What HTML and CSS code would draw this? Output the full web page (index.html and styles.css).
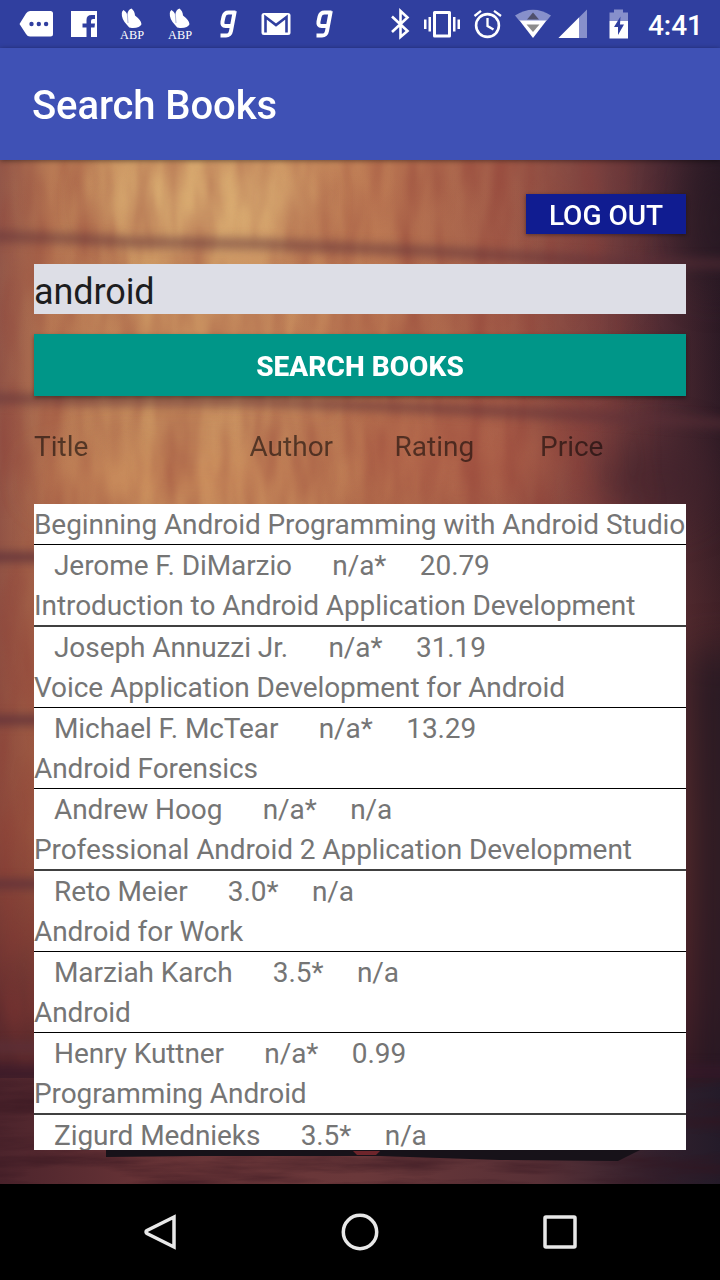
FILE: index.html
```html
<!DOCTYPE html>
<html lang="en">
<head>
<meta charset="utf-8">
<title>Search Books</title>
<link rel="stylesheet" href="styles.css">
</head>
<body>
<div class="phone">
  <header class="status">
    <svg class="status-icons" viewBox="0 0 720 48" width="720" height="48" fill="#fff">
      <path d="M19.500 24 L26 13.500 Q27.500 11 30 11 H50.500 Q53 11 53 13.500 V34 Q53 36.500 50.500 36.500 H30 Q27.500 36.500 26 34 Z"/>
      <g fill="#303f9f"><circle cx="31.500" cy="24" r="2.200"/><circle cx="38.800" cy="24" r="2.200"/><circle cx="46.100" cy="24" r="2.200"/></g>
      <path d="M71 11 H97 V37 H91 V27.500 H94.500 L95 23.500 H91 V21 Q91 19 93 19 H95 V15 H91.500 Q86.500 15 86.500 20 V23.500 H82.500 V27.500 H86.500 V37 H71 Z"/>
      <g id="abp">
        <path d="M127.500 25.500 Q121.200 19.500 121.800 13 Q122 11 123.500 10 Q126.300 11.500 127.300 14.500 Q128 9.500 131.500 8.500 Q134.800 11 135 15.500 Q141.500 20.500 141.500 24.200 Q140 27.800 133 28 Q129 28.500 127.500 25.500 Z"/>
        <path d="M128 23 L127.300 14" stroke="#7380c4" stroke-width=".6"/>
        <text class="abp" x="120" y="39" textLength="24" lengthAdjust="spacingAndGlyphs">ABP</text>
      </g>
      <use href="#abp" x="48"/>
      <g id="g">
        <path d="M235.500 12.500 H228.500 Q224.500 12.500 223.600 16.500 L222.500 21.500 Q221.800 26 225.500 26 H231.500 M234.800 11 L231 31 Q230.200 35.500 226 35.500 H220.500" fill="none" stroke="#fff" stroke-width="4"/>
      </g>
      <rect x="261.500" y="13" width="29" height="22" rx="2.500"/>
      <path d="M265.500 32.500 V17 L276 25 L286.500 17 V32.500" fill="none" stroke="#303f9f" stroke-width="2.600"/>
      <use href="#g" x="96"/>
      <path d="M392 16.500 L407.500 31 L400.500 37 V11 L407.500 17.500 L392 32" fill="none" stroke="#fff" stroke-width="2.600"/>
      <path d="M434.500 11 H449.500 Q451 11 451 12.500 V36 Q451 37.500 449.500 37.500 H434.500 Q433 37.500 433 36 V12.500 Q433 11 434.500 11 Z M436 14 V34.500 H448 V14 Z" fill-rule="evenodd"/>
      <path d="M424 19.500 h2.500 v9.500 h-2.500z M428.500 17 h2.500 v14.500 h-2.500z M453 17 h2.500 v14.500 h-2.500z M457.500 19.500 h2.500 v9.500 h-2.500z"/>
      <circle cx="487.500" cy="25.500" r="11.400" fill="none" stroke="#fff" stroke-width="2.600"/>
      <path d="M487.500 18 V26 L493.500 29.500 M474.500 16 L481 10.800 M494 10.800 L501 16" fill="none" stroke="#fff" stroke-width="2.300"/>
      <path d="M515 15.500 Q533 4 551 15.500 L546.500 21 H519.500 Z" fill="#8790cb"/>
      <path d="M519.500 20.500 H546.500 L533 38 Z"/>
      <path d="M533 12.500 L539 19.500 H527 Z" fill="#4f506c"/>
      <path d="M526.500 24.500 H539.500 L533 32 Z" fill="#8c8c8c"/>
      <path d="M558.500 38 L587 9.500 V38 Z" fill="#8790cb"/>
      <path d="M558.500 38 L579 17.500 V38 Z"/>
      <path d="M609.500 12.500 H614 V9.500 H623 V12.500 H628 V21 H609.500 Z" fill="#8790cb"/>
      <path d="M609.500 21 H628 V38.500 H609.500 Z"/>
      <path d="M620.500 16.500 L614 27 H618 V35 L624 24.500 H620 Z" fill="#303f9f"/>
    </svg>
    <span class="clock">4:41</span>
  </header>
  <div class="appbar">Search Books</div>
  <main class="content">
    <svg class="wood" viewBox="0 160 720 1024" width="720" height="1024" preserveAspectRatio="none">
      <defs>
        <linearGradient id="side" x1="0" x2="1" y1="0" y2="0">
          <stop offset="0" stop-color="#94594a"/><stop offset=".07" stop-color="#b87954"/>
          <stop offset=".2" stop-color="#ce9964"/><stop offset=".36" stop-color="#ce9764"/>
          <stop offset=".52" stop-color="#bd7a54"/><stop offset=".7" stop-color="#a35e4a"/>
          <stop offset=".83" stop-color="#7a413f"/><stop offset=".92" stop-color="#4c2a33"/>
          <stop offset="1" stop-color="#271824"/>
        </linearGradient>
        <linearGradient id="down" x1="0" x2="0" y1="0" y2="1">
          <stop offset="0" stop-color="#8a3b30" stop-opacity="0"/><stop offset=".3" stop-color="#8a3b30" stop-opacity=".1"/>
          <stop offset=".65" stop-color="#84392d" stop-opacity=".5"/><stop offset=".82" stop-color="#5c2529" stop-opacity=".8"/>
          <stop offset=".9" stop-color="#3e1a24" stop-opacity=".9"/><stop offset="1" stop-color="#4a222a"/>
        </linearGradient>
        <linearGradient id="floor" x1="0" x2="1" y1="0" y2="0">
          <stop offset="0" stop-color="#4c242c"/><stop offset=".2" stop-color="#673336"/>
          <stop offset=".5" stop-color="#6a383a"/><stop offset=".75" stop-color="#583036"/>
          <stop offset=".92" stop-color="#30202d"/><stop offset="1" stop-color="#241b29"/>
        </linearGradient>
        <filter id="soft" x="-20%" y="-100%" width="140%" height="300%" color-interpolation-filters="sRGB"><feGaussianBlur stdDeviation="5"/></filter>
        <filter id="haze" x="-50%" y="-50%" width="200%" height="200%" color-interpolation-filters="sRGB"><feGaussianBlur stdDeviation="20"/></filter>
        <filter id="grain" x="0" y="0" width="100%" height="100%" color-interpolation-filters="sRGB">
          <feTurbulence type="fractalNoise" baseFrequency=".045 .01" numOctaves="3" seed="8"/>
          <feColorMatrix values="0 0 0 0 .55  0 0 0 0 .22  0 0 0 0 .2  1.700 0 0 0 -.6"/>
          <feGaussianBlur stdDeviation="2 3"/>
        </filter>
        <filter id="streak" x="0" y="0" width="100%" height="100%" color-interpolation-filters="sRGB">
          <feTurbulence type="fractalNoise" baseFrequency=".008 .07" numOctaves="5" seed="5"/>
          <feColorMatrix values="0 0 0 0 .2  0 0 0 0 .08  0 0 0 0 .12  2 0 0 0 -.75"/>
          <feGaussianBlur stdDeviation=".6"/>
        </filter>
        <linearGradient id="fade" x1="0" x2="1" y1="0" y2="0">
          <stop offset="0" stop-color="#fff"/><stop offset=".75" stop-color="#fff"/><stop offset=".93" stop-color="#000"/>
        </linearGradient>
        <mask id="left-side"><rect y="160" width="720" height="1024" fill="url(#fade)"/></mask>
      </defs>
      <rect y="160" width="720" height="1024" fill="url(#side)"/>
      <rect y="160" width="720" height="1024" fill="url(#down)"/>
      <g filter="url(#haze)">
        <ellipse cx="205" cy="200" rx="105" ry="45" fill="#deb678" opacity=".65"/>
        <ellipse cx="190" cy="480" rx="150" ry="26" fill="#cf8e5b" opacity=".6"/>
        <ellipse cx="460" cy="455" rx="100" ry="45" fill="#b9654b" opacity=".45"/>
        <ellipse cx="660" cy="480" rx="60" ry="40" fill="#40222b" opacity=".65"/>
        <ellipse cx="715" cy="220" rx="30" ry="70" fill="#291923" opacity=".7"/>
        <rect x="690" y="650" width="60" height="460" fill="#1f1722" opacity=".8"/>
      </g>
      <rect y="160" width="720" height="912" filter="url(#grain)" opacity=".5" mask="url(#left-side)"/>
      <g filter="url(#soft)" fill="none" stroke="#5c3038">
        <path d="M-10 236 L80 239 L130 242 L260 244 L420 251 L620 262 L730 264" stroke-width="11" opacity=".5"/>
        <path d="M-10 398 L80 400 L260 401 L400 407 L580 415 L730 424" stroke-width="11" opacity=".52"/>
        <path d="M-10 557 H50 M-10 720 H50 M-10 884 H50 M-10 1047 H50" stroke-width="9" opacity=".85"/>
        <path d="M-10 1072 H730" stroke="#35182a" stroke-width="16" opacity=".6"/>
      </g>
      <rect y="1078" width="720" height="106" fill="url(#floor)"/>
      <rect y="1078" width="720" height="106" filter="url(#streak)" opacity=".6"/>
      <path d="M106 1150 H640 L618 1161 L500 1160 L380 1156 H200 L106 1157 Z" fill="#171219"/>
      <path d="M353 1151 H380 L376 1155 H357 Z" fill="#6e252b"/>
    </svg>
    <button class="logout">LOG OUT</button>
    <input class="query" type="text" value="android" aria-label="Search">
    <button class="search">SEARCH BOOKS</button>
    <div class="columns"><span>Title</span><span>Author</span><span>Rating</span><span>Price</span></div>
    <div class="results">
      <article class="book"><div class="title">Beginning Android Programming with Android Studio</div><div class="meta"><span>Jerome F. DiMarzio</span><span>n/a*</span><span>20.79</span></div></article>
      <article class="book"><div class="title">Introduction to Android Application Development</div><div class="meta"><span>Joseph Annuzzi Jr.</span><span>n/a*</span><span>31.19</span></div></article>
      <article class="book"><div class="title">Voice Application Development for Android</div><div class="meta"><span>Michael F. McTear</span><span>n/a*</span><span>13.29</span></div></article>
      <article class="book"><div class="title">Android Forensics</div><div class="meta"><span>Andrew Hoog</span><span>n/a*</span><span>n/a</span></div></article>
      <article class="book"><div class="title">Professional Android 2 Application Development</div><div class="meta"><span>Reto Meier</span><span>3.0*</span><span>n/a</span></div></article>
      <article class="book"><div class="title">Android for Work</div><div class="meta"><span>Marziah Karch</span><span>3.5*</span><span>n/a</span></div></article>
      <article class="book"><div class="title">Android</div><div class="meta"><span>Henry Kuttner</span><span>n/a*</span><span>0.99</span></div></article>
      <article class="book"><div class="title">Programming Android</div><div class="meta"><span>Zigurd Mednieks</span><span>3.5*</span><span>n/a</span></div></article>
    </div>
  </main>
  <nav class="navbar">
    <svg width="40" height="40" viewBox="0 0 40 40"><path d="M34 5 V35 L7 21.500 Q5 20 7 18.500 Z"/></svg>
    <svg width="40" height="40" viewBox="0 0 40 40"><circle cx="20" cy="20" r="16.700"/></svg>
    <svg width="40" height="40" viewBox="0 0 40 40"><rect x="5" y="5" width="30" height="30" rx="1"/></svg>
  </nav>
</div>
</body>
</html>
```
FILE: styles.css
```css
* { box-sizing: border-box; }
body { margin: 0; background: #000; font-family: Roboto, sans-serif; }
.phone { width: 720px; height: 1280px; display: flex; flex-direction: column; overflow: hidden; }
.status { position: relative; height: 48px; background: #303f9f; display: flex; align-items: center; justify-content: flex-end; padding: 3px 17px 0 0; }
.status-icons { position: absolute; left: 0; top: 0; }
.abp { font: 13px "Liberation Serif", serif; }
.clock { color: #fff; font-size: 28px; font-weight: 500; line-height: 46px; }
.appbar { position: relative; z-index: 1; height: 112px; padding: 2px 32px 0; background: #3f51b5; color: #fff; font-size: 40px; font-weight: 500; line-height: 112px; letter-spacing: -.1px; box-shadow: 0 1px 5px rgba(0, 0, 0, .45); }
.content { position: relative; height: 1024px; padding: 34px 34px; display: flex; flex-direction: column; }
.wood { position: absolute; left: 0; top: 0; }
.logout, .query, .search, .columns, .results { position: relative; border: 0; border-radius: 0; margin: 0; font-family: inherit; }
.logout { align-self: flex-end; width: 160px; height: 40px; padding: 3px 0 0; background: #101c91; color: #fff; font-size: 28px; font-weight: 500; line-height: 38px; box-shadow: 0 1px 4px rgba(0, 0, 0, .4); }
.query { height: 50px; margin-top: 30px; padding: 5px 0 0; background: #dddee6; color: #1d1d1f; font-size: 36px; letter-spacing: -.1px; outline: 0; }
.search { height: 62px; margin-top: 20px; padding: 3px 0 0; background: #009688; color: #fff; font-size: 28px; font-weight: 800; letter-spacing: .05px; box-shadow: 0 2px 4px rgba(0, 0, 0, .4); }
.columns { display: grid; grid-template-columns: 215.500px 145px 145.500px 1fr; height: 40px; margin-top: 30px; color: rgba(0, 0, 0, .54); font-size: 28px; line-height: 41px; }
.results { height: 646px; margin-top: 38px; background: #fff; overflow: hidden; color: #757575; font-size: 28px; letter-spacing: -.08px; white-space: nowrap; }
.title { height: 41px; line-height: 41px; border-bottom: 1px solid #000; }
.book:nth-child(3n+2) .title { height: 42px; border-bottom: 2px solid #404040; }
.meta { display: flex; height: 40px; line-height: 41px; padding-left: 20px; }
.meta span:nth-child(2) { margin: 0 33.500px 0 40.300px; }
.navbar { height: 96px; display: flex; justify-content: center; align-items: center; gap: 160px; background: #000; fill: none; stroke: #e8e8e8; stroke-width: 3.500; }
```
